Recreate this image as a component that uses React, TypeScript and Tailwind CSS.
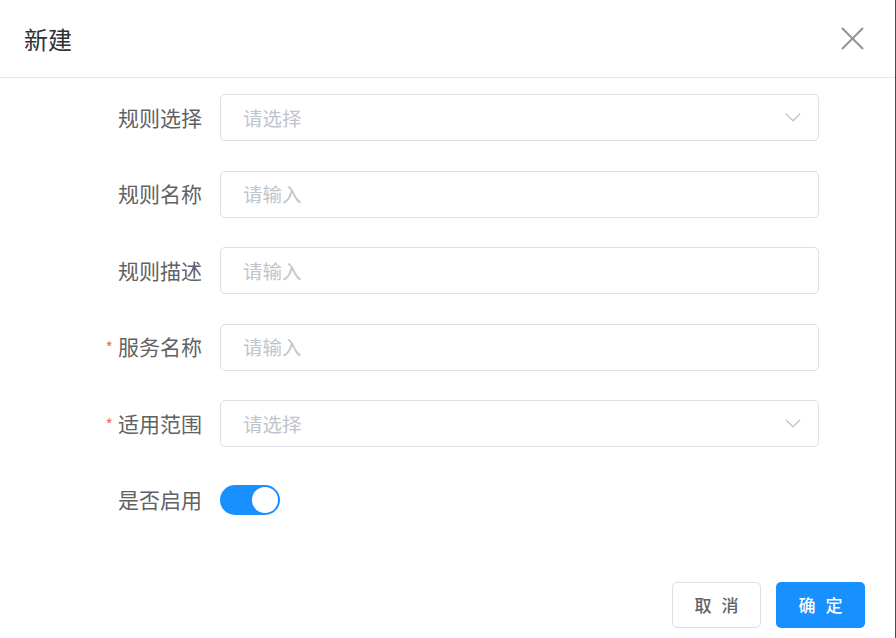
import { useState } from "react";

type Field = {
  label: string;
  kind: "select" | "input";
  required?: boolean;
};

const fields: Field[] = [
  { label: "规则选择", kind: "select" },
  { label: "规则名称", kind: "input" },
  { label: "规则描述", kind: "input" },
  { label: "服务名称", kind: "input", required: true },
  { label: "适用范围", kind: "select", required: true },
];

function Chevron() {
  return (
    <svg width="16" height="9" viewBox="0 0 16 9" fill="none" className="shrink-0">
      <path d="M0.8 0.8 L8 7.8 L15.2 0.8" stroke="#c0c4cc" strokeWidth="1.3" />
    </svg>
  );
}

export default function App() {
  const [enabled, setEnabled] = useState(true);

  return (
    <div
      className="flex h-[638px] w-[896px] bg-white"
      style={{ fontFamily: '"Noto Sans CJK SC", "Noto Sans", sans-serif' }}
    >
      <div className="flex w-[895px] flex-col">
        <header className="flex h-[78px] items-center justify-between border-b border-[#e4e7ed] pl-6 pr-[31px]">
          <h2 className="text-[24px] leading-none text-[#303133]">新建</h2>
          <button type="button" className="flex h-6 w-6 items-center justify-center">
            <svg width="23" height="23" viewBox="0 0 23 23" fill="none">
              <path d="M1 1 L22 22 M22 1 L1 22" stroke="#909399" strokeWidth="2" />
            </svg>
          </button>
        </header>

        <div className="flex flex-col pt-4">
          {fields.map((f) => (
            <div key={f.label} className="mb-[29.5px] flex h-[47px] items-center">
              <label className="flex w-[220px] shrink-0 items-center justify-end pr-[18px] text-[21px] text-[#606266]">
                {f.required && <span className="mr-[5px] text-[16px] text-[#f56c6c]">*</span>}
                {f.label}
              </label>
              <div className="flex h-[47px] w-[599px] items-center justify-between rounded-[5px] border border-[#dcdfe6] pl-[22px] pr-[17px]">
                <span className="text-[19.5px] text-[#c0c4cc]">
                  {f.kind === "select" ? "请选择" : "请输入"}
                </span>
                {f.kind === "select" && <Chevron />}
              </div>
            </div>
          ))}

          <div className="flex h-[47px] items-center">
            <label className="w-[220px] shrink-0 pr-[18px] text-right text-[21px] text-[#606266]">
              是否启用
            </label>
            <button
              type="button"
              onClick={() => setEnabled(!enabled)}
              className={`flex h-[30px] w-[60px] items-center rounded-full px-[2px] ${
                enabled ? "justify-end bg-[#1890ff]" : "justify-start bg-[#dcdfe6]"
              }`}
            >
              <span className="h-[26px] w-[26px] rounded-full bg-white" />
            </button>
          </div>
        </div>

        <footer className="mt-auto flex justify-end gap-[15px] pb-[10px] pr-[30px]">
          <button
            type="button"
            className="h-[46px] w-[89px] rounded-[5px] border border-[#dcdfe6] bg-white pl-[10px] text-[17px] font-medium tracking-[10px] text-[#606266]"
          >
            取消
          </button>
          <button
            type="button"
            className="h-[46px] w-[89px] rounded-[5px] bg-[#1890ff] pl-[10px] text-[17px] font-medium tracking-[10px] text-white"
          >
            确定
          </button>
        </footer>
      </div>
      <div className="w-px bg-[#4a4a4a]" />
    </div>
  );
}
